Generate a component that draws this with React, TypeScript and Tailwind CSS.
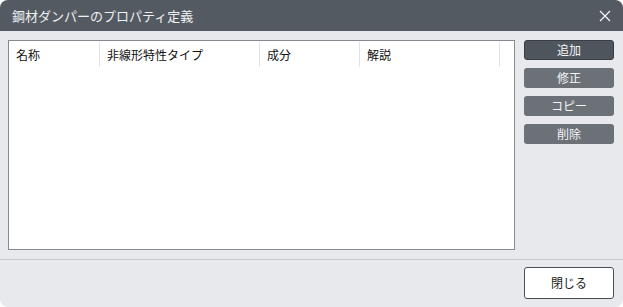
import React from "react";

const cols = [
  { name: "名称", w: "w-[91px]" },
  { name: "非線形特性タイプ", w: "w-[160px]" },
  { name: "成分", w: "w-[100px]" },
  { name: "解説", w: "w-[140px]" },
];

const actions = ["追加", "修正", "コピー", "削除"];

export default function App() {
  return (
    <div className="w-[623px] h-[307px] bg-white font-['Noto_Sans_CJK_JP',sans-serif]">
      <div className="w-full h-full flex flex-col bg-[#e8e9ed] rounded-lg overflow-hidden">
        <div className="h-[31px] bg-[#545a62] flex items-center justify-between pl-3 pr-2.5 shrink-0">
          <span className="text-[13px] text-[#eef0f2]">鋼材ダンパーのプロパティ定義</span>
          <svg width="12" height="12" viewBox="0 0 12 12" className="mr-0.5">
            <path d="M1 1L11 11M11 1L1 11" stroke="#f2f3f5" strokeWidth="1.3" />
          </svg>
        </div>

        <div className="flex gap-[9px] pl-2 pr-[9px] pt-[9px] h-[228px] shrink-0">
          <div className="w-[508px] h-[210px] bg-white border border-[#858a90]">
            <div className="flex h-[25px] mt-[1px]">
              {cols.map((c) => (
                <div
                  key={c.name}
                  className={`${c.w} border-r border-[#e1e2e4] text-[12px] text-[#111] pl-[7px] flex items-center`}
                >
                  {c.name}
                </div>
              ))}
            </div>
          </div>
          <div className="flex flex-col gap-2 w-[90px]">
            {actions.map((a, i) => (
              <button
                key={a}
                type="button"
                className={`h-[20px] rounded-[3px] text-[12px] text-[#f4f5f7] flex items-center justify-center ${
                  i === 0 ? "bg-[#4f555d] border border-[#3a3e44]" : "bg-[#6c7178]"
                }`}
              >
                {a}
              </button>
            ))}
          </div>
        </div>

        <div className="h-px bg-[#c6c8cc] shrink-0" />

        <div className="flex justify-end pr-[9px] pt-[7px]">
          <button
            type="button"
            className="w-[90px] h-[32px] bg-white border border-[#4a4f56] rounded-[3px] text-[12px] text-[#222] flex items-center justify-center"
          >
            閉じる
          </button>
        </div>
      </div>
    </div>
  );
}
